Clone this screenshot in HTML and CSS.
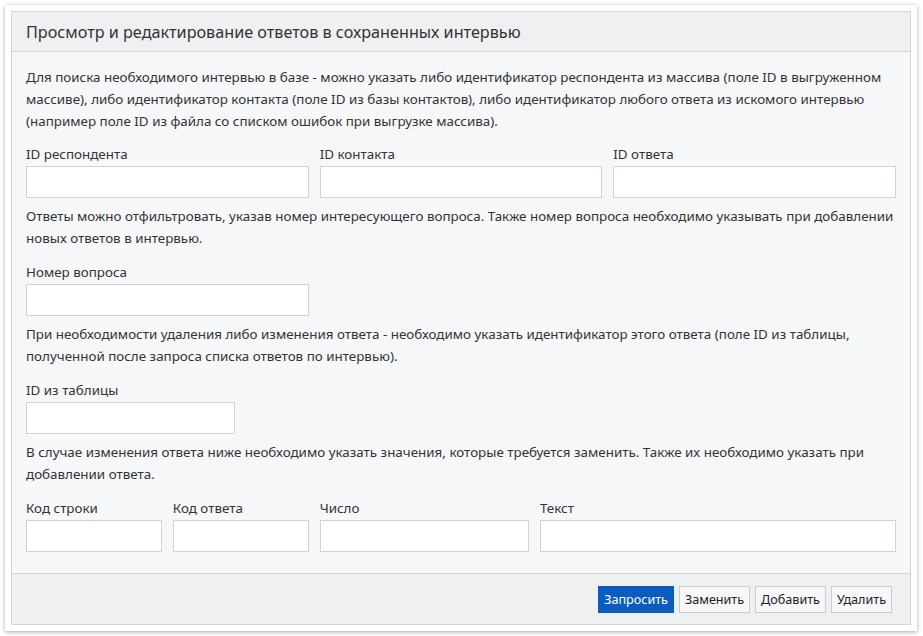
FILE: index.html
```html
<!DOCTYPE html>
<html lang="ru">
<head>
<meta charset="utf-8">
<link rel="stylesheet" href="styles.css">
</head>
<body>
<div class="frame">
  <div class="panel">
    <div class="panel-head">Просмотр и редактирование ответов в сохраненных интервью</div>
    <div class="panel-body">
      <p class="note">Для поиска необходимого интервью в базе - можно указать либо идентификатор респондента из массива (поле ID в выгруженном массиве), либо идентификатор контакта (поле ID из базы контактов), либо идентификатор любого ответа из искомого интервью (например поле ID из файла со списком ошибок при выгрузке массива).</p>
      <div class="grid">
        <label class="field span4"><span class="lbl">ID респондента</span><input type="text"></label>
        <label class="field span4"><span class="lbl">ID контакта</span><input type="text"></label>
        <label class="field span4"><span class="lbl">ID ответа</span><input type="text"></label>
      </div>
      <p class="note">Ответы можно отфильтровать, указав номер интересующего вопроса. Также номер вопроса необходимо указывать при добавлении новых ответов в интервью.</p>
      <div class="grid">
        <label class="field span4"><span class="lbl">Номер вопроса</span><input type="text"></label>
      </div>
      <p class="note">При необходимости удаления либо изменения ответа - необходимо указать идентификатор этого ответа (поле ID из таблицы, полученной после запроса списка ответов по интервью).</p>
      <div class="grid">
        <label class="field span3"><span class="lbl">ID из таблицы</span><input type="text"></label>
      </div>
      <p class="note">В случае изменения ответа ниже необходимо указать значения, которые требуется заменить. Также их необходимо указать при добавлении ответа.</p>
      <div class="grid last">
        <label class="field span2"><span class="lbl">Код строки</span><input type="text"></label>
        <label class="field span2"><span class="lbl">Код ответа</span><input type="text"></label>
        <label class="field span3"><span class="lbl">Число</span><input type="text"></label>
        <label class="field span5"><span class="lbl">Текст</span><input type="text"></label>
      </div>
    </div>
    <div class="panel-foot">
      <button class="btn primary">Запросить</button>
      <button class="btn">Заменить</button>
      <button class="btn">Добавить</button>
      <button class="btn">Удалить</button>
    </div>
  </div>
</div>
</body>
</html>
```

FILE: styles.css
```css
* { box-sizing: border-box; }
html, body { margin: 0; padding: 0; background: #ffffff; }
body {
  font-family: "Noto Sans", "Open Sans", sans-serif;
  font-size: 13.4px;
  color: #333333;
  padding: 5px 6px 5px 5px;
}
.frame {
  background: #ffffff;
  padding: 6px;
  box-shadow: 0 1px 4px rgba(0,0,0,0.35);
  width: 912px;
}
.panel {
  border: 1px solid #d3d5d8;
  background: #f6f7f9;
}
.panel-head {
  background: #eef0f2;
  border-bottom: 1px solid #d3d5d8;
  height: 40px;
  padding: 0 14px;
  display: flex;
  align-items: center;
  font-size: 16.2px;
  color: #333333;
}
.panel-body {
  padding: 14px 14px 21px 14px;
}
.note {
  margin: 0 0 13px 0;
  line-height: 22px;
}
.note:first-child { margin-bottom: 12px; }
.grid {
  display: grid;
  grid-template-columns: repeat(12, 1fr);
  column-gap: 11px;
  margin-bottom: 7px;
}
.grid.last { margin-bottom: 0; }
.field { display: flex; flex-direction: column; }
.span2 { grid-column: span 2; }
.span3 { grid-column: span 3; }
.span4 { grid-column: span 4; }
.span5 { grid-column: span 5; }
.lbl {
  line-height: 20px;
  margin-bottom: 2px;
}
.field input {
  height: 32px;
  border: 1px solid #cfd2d6;
  background: #ffffff;
  font: inherit;
  padding: 0 6px;
  margin: 0;
}
.panel-foot {
  border-top: 1px solid #d3d5d8;
  background: #eff0f2;
  height: 51px;
  display: flex;
  justify-content: flex-end;
  align-items: center;
  gap: 5px;
  padding: 0 18px 0 0;
}
.btn {
  height: 27px;
  font-family: inherit;
  font-size: 12.6px;
  color: #222222;
  background: #f6f7f9;
  border: 1px solid #c9ccd0;
  padding: 0 5px;
  margin: 0;
}
.btn.primary {
  background: #0b5cc1;
  border-color: #0b5cc1;
  color: #ffffff;
}
```
